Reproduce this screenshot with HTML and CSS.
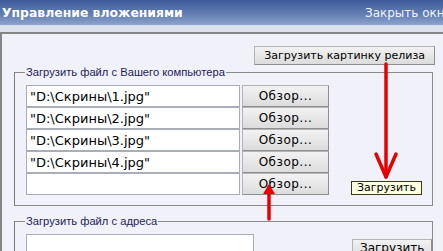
FILE: index.html
```html
<!DOCTYPE html>
<html lang="ru">
<head>
    <meta charset="UTF-8">
    <title>Управление вложениями</title>
    <link rel="stylesheet" href="styles.css">
</head>
<body>
    <header class="topbar">
        <h1>Управление вложениями</h1>
        <a class="close-link" href="#">Закрыть окно</a>
    </header>
    <div class="strip"></div>
    <main class="panel">
        <div class="release-row">
            <button class="btn">Загрузить картинку релиза</button>
        </div>
        <fieldset class="box">
            <legend>Загрузить файл с Вашего компьютера</legend>
            <div class="file-grid">
                <input class="field" type="text" value='"D:\Скрины\1.jpg"'>
                <button class="btn browse">Обзор...</button>
                <span></span>
                <input class="field" type="text" value='"D:\Скрины\2.jpg"'>
                <button class="btn browse">Обзор...</button>
                <span></span>
                <input class="field" type="text" value='"D:\Скрины\3.jpg"'>
                <button class="btn browse">Обзор...</button>
                <span></span>
                <input class="field" type="text" value='"D:\Скрины\4.jpg"'>
                <button class="btn browse">Обзор...</button>
                <span></span>
                <input class="field" type="text" value="">
                <button class="btn browse">Обзор...</button>
                <div class="upload-cell"><button class="tip-btn">Загрузить</button></div>
            </div>
        </fieldset>
        <fieldset class="box">
            <legend>Загрузить файл с адреса</legend>
            <div class="url-row">
                <input class="field url" type="text" value="">
                <button class="btn upload">Загрузить</button>
            </div>
        </fieldset>
    </main>
    <svg class="marks" width="443" height="251" viewBox="0 0 443 251">
        <g stroke="#e60000" stroke-width="3.5" fill="none" stroke-linecap="round" stroke-linejoin="round">
            <path d="M386 64 L386 177"/>
            <path d="M376 154 L386 177 L396 154"/>
            <path d="M269 219 L269 187"/>
        </g>
        <path d="M263 194 L269 184 L275 194 Z" fill="#e60000"/>
    </svg>
</body>
</html>
```

FILE: styles.css
```css
* {
    margin: 0;
    padding: 0;
    box-sizing: border-box;
}
body {
    font-family: 'DejaVu Sans', Verdana, sans-serif;
    background: #f1f1f9;
    width: 443px;
    height: 251px;
    overflow: hidden;
    position: relative;
}
.topbar {
    height: 25px;
    display: flex;
    justify-content: space-between;
    align-items: center;
    padding: 0 0 0 2px;
    background: linear-gradient(#3e5c9b, #6680b5 60%, #8ea3cc);
    color: #fff;
    white-space: nowrap;
    overflow: hidden;
}
.topbar h1 {
    font-size: 12.4px;
    font-weight: bold;
}
.close-link {
    color: #f2f4fa;
    font-size: 12px;
    text-decoration: none;
    margin-right: -9px;
}
.strip {
    height: 7px;
    background: #dde1ed;
}
.panel {
    border-top: 2px solid #858585;
    border-left: 2px solid #858585;
    background: #f1f1f9;
    height: 219px;
    padding: 12px 8px 0 12px;
}
.release-row {
    display: flex;
    justify-content: flex-end;
}
.btn {
    font-family: 'DejaVu Sans', Verdana, sans-serif;
    font-size: 11px;
    color: #000;
    background: linear-gradient(#f2f2f2, #dcdcdc);
    border: 1px solid #b4b4b4;
    border-right-color: #8e8e8e;
    border-bottom-color: #8e8e8e;
    height: 19px;
    padding: 0 9px;
}
.box {
    border: 1px solid #8a8a8a;
    border-left-color: #7a7a7a;
    margin: 0;
    padding: 6px 0 10px 11px;
    width: 419px;
}
.box + .box {
    margin-top: 8px;
}
.box legend {
    font-family: 'Liberation Sans', Arial, sans-serif;
    font-size: 11.2px;
    color: #1c1c5a;
    line-height: 14px;
    padding: 0 1px;
    margin-left: -1px;
}
.file-grid {
    display: grid;
    grid-template-columns: 214px 87px 1fr;
    grid-template-rows: repeat(5, 22px);
    column-gap: 2px;
}
.field {
    font-family: 'DejaVu Sans', Verdana, sans-serif;
    font-size: 13px;
    height: 22px;
    border: 1px solid #a9aeb6;
    background: #fff;
    padding: 0 3px;
    color: #000;
    outline: none;
}
.browse {
    height: 22px;
    font-size: 12px;
    letter-spacing: 0.5px;
    padding: 0;
}
.upload-cell {
    padding: 3px 0 0 20px;
}
.tip-btn {
    font-family: 'DejaVu Sans', Verdana, sans-serif;
    font-size: 11px;
    height: 14px;
    line-height: 12px;
    padding: 0 5px;
    background: #ffffe1;
    border: 1px solid #3a3a1a;
    color: #000;
}
.url-row {
    display: flex;
    align-items: flex-start;
}
.url {
    width: 228px;
    height: 24px;
}
.upload {
    margin: 5px 0 0 98px;
    height: 18px;
    padding: 0 7px;
    font-size: 12px;
}
.marks {
    position: absolute;
    left: 0;
    top: 0;
    pointer-events: none;
}
```
